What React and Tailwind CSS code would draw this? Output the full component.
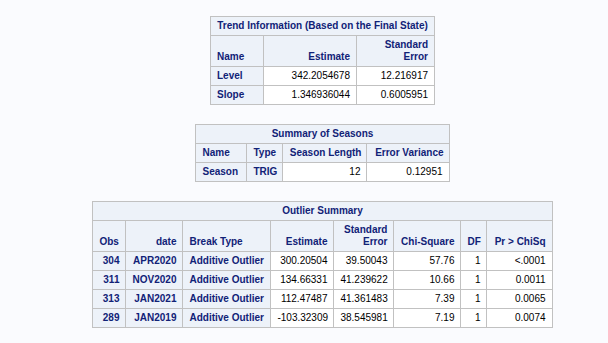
import React from 'react';

const th = 'border border-[#c1c1c1] bg-[#edf2f9] px-[6px] py-[3px] font-bold text-[#112277] align-bottom whitespace-nowrap';
const td = 'border border-[#c1c1c1] bg-white px-[6px] py-[3px] text-right text-black whitespace-nowrap';

function Table({ width, cols, title, children }) {
  return (
    <table className={`table-fixed border-collapse ${width}`}>
      <colgroup>
        {cols.map((c, i) => (
          <col key={i} style={{ width: c }} />
        ))}
      </colgroup>
      <thead>
        <tr>
          <th colSpan={cols.length} className={`${th} text-center`}>
            {title}
          </th>
        </tr>
      </thead>
      {children}
    </table>
  );
}

const outliers = [
  ['304', 'APR2020', '300.20504', '39.50043', '57.76', '1', '<.0001'],
  ['311', 'NOV2020', '134.66331', '41.239622', '10.66', '1', '0.0011'],
  ['313', 'JAN2021', '112.47487', '41.361483', '7.39', '1', '0.0065'],
  ['289', 'JAN2019', '-103.32309', '38.545981', '7.19', '1', '0.0074'],
];

export default function App() {
  return (
    <div className="w-[608px] h-[343px] overflow-hidden bg-[#fafbfe]">
      <div
        className="w-[645px] pt-[16px] flex flex-col items-center gap-[19px] text-[10px] leading-[12px]"
        style={{ fontFamily: '"Liberation Sans", Arial, sans-serif' }}
      >
        {/* Trend */}
        <Table width="w-[225px]" cols={[53, 93, 78]} title="Trend Information (Based on the Final State)">
          <tbody>
            <tr>
              <th className={`${th} text-left`}>Name</th>
              <th className={`${th} text-right`}>Estimate</th>
              <th className={`${th} text-right`}>
                Standard
                <br />
                Error
              </th>
            </tr>
            <tr>
              <th className={`${th} text-left`}>Level</th>
              <td className={td}>342.2054678</td>
              <td className={td}>12.216917</td>
            </tr>
            <tr>
              <th className={`${th} text-left`}>Slope</th>
              <td className={td}>1.346936044</td>
              <td className={td}>0.6005951</td>
            </tr>
          </tbody>
        </Table>

        {/* Seasons */}
        <Table width="w-[254px]" cols={[51, 36, 84, 82]} title="Summary of Seasons">
          <tbody>
            <tr>
              <th className={`${th} text-left`}>Name</th>
              <th className={`${th} text-left`}>Type</th>
              <th className={`${th} text-right !px-[5px]`}>Season Length</th>
              <th className={`${th} text-right !px-[5px]`}>Error Variance</th>
            </tr>
            <tr>
              <th className={`${th} text-left`}>Season</th>
              <th className={`${th} text-left`}>TRIG</th>
              <td className={td}>12</td>
              <td className={td}>0.12951</td>
            </tr>
          </tbody>
        </Table>

        {/* Outliers */}
        <Table width="w-[460px]" cols={[33, 57, 88, 63, 60, 67, 26, 65]} title="Outlier Summary">
          <tbody>
            <tr>
              <th className={`${th} text-left`}>Obs</th>
              <th className={`${th} text-right`}>date</th>
              <th className={`${th} text-left`}>Break Type</th>
              <th className={`${th} text-right`}>Estimate</th>
              <th className={`${th} text-right`}>
                Standard
                <br />
                Error
              </th>
              <th className={`${th} text-right`}>Chi-Square</th>
              <th className={`${th} text-right`}>DF</th>
              <th className={`${th} text-right`}>Pr &gt; ChiSq</th>
            </tr>
            {outliers.map((r) => (
              <tr key={r[0]}>
                <th className={`${th} text-right`}>{r[0]}</th>
                <th className={`${th} text-right`}>{r[1]}</th>
                <th className={`${th} text-left`}>Additive Outlier</th>
                <td className={td}>{r[2]}</td>
                <td className={td}>{r[3]}</td>
                <td className={td}>{r[4]}</td>
                <td className={td}>{r[5]}</td>
                <td className={td}>{r[6]}</td>
              </tr>
            ))}
          </tbody>
        </Table>
      </div>
    </div>
  );
}
